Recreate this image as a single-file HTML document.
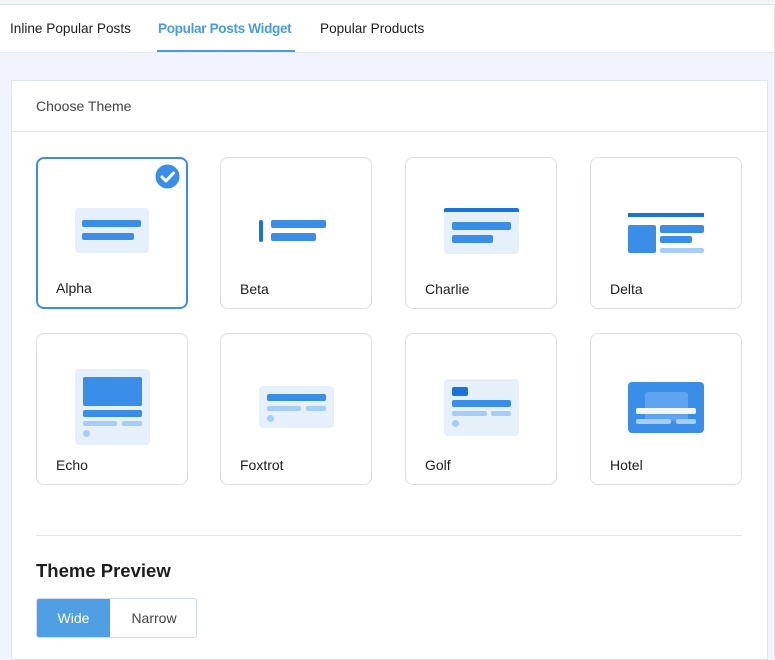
<!DOCTYPE html>
<html><head><style>
*{margin:0;padding:0;box-sizing:border-box}
body{width:775px;height:656px;overflow:hidden;background:#f1f4fc;font-family:"Liberation Sans",Arial,sans-serif;position:relative}
.top{position:absolute;left:0;top:0;width:775px;height:5px;background:#f3f4f6;border-bottom:1px solid #dbe6ef}
.tabs{position:absolute;left:0;top:5px;width:774px;height:48px;background:#fff;border-bottom:1px solid #e3e9f3}
.tab{position:absolute;top:16px;font-size:13.6px;color:#1e1e1e}
.tab.act{color:#4a9be3;font-weight:bold;letter-spacing:-0.35px}
.ul{position:absolute;left:157px;top:45px;width:138px;height:2px;background:#4a9be3}
.rb{position:absolute;right:0;top:5px;width:1px;height:651px;background:#e0e4ea}
.panel{position:absolute;left:11px;top:80px;width:757px;height:580px;background:#fff;border:1px solid #e0e5ee}
.ph{position:absolute;left:0;top:0;width:100%;height:51px;border-bottom:1px solid #e0e5ee}
.ph span{position:absolute;left:24px;top:17px;font-size:14px;color:#444}
.card{position:absolute;width:152px;height:152px;border:1px solid #dcdee4;border-radius:8px;background:#fff}
.card.sel{border:2px solid #3a8ee8}
.lbl{position:absolute;left:19px;top:123px;font-size:14px;color:#1e1e1e}
.sel .lbl{left:18px;top:121px}
.r{position:absolute;border-radius:2px}
.bg{background:#e6f0fb;border-radius:4px}
.b{background:#3a8ee8}
.d{background:#1a73d9}
.l{background:#a7ccf5}
.dot{position:absolute;width:7px;height:7px;border-radius:50%;background:#a7ccf5}
.div{position:absolute;left:36px;top:535px;width:706px;height:1px;background:#dde3ec}
h2{position:absolute;left:36px;top:560px;font-size:18.5px;font-weight:bold;color:#1e1e1e}
.btns{position:absolute;left:36px;top:598px;width:161px;height:40px;border:1px solid #d3dce8;border-radius:3px;overflow:hidden}
.w{position:absolute;left:0;top:0;width:73px;height:40px;background:#4e9fe3;color:#fff;font-size:14px;text-align:center;line-height:38px}
.n{position:absolute;left:73px;top:0;width:88px;height:40px;color:#444;font-size:14px;text-align:center;line-height:38px}
</style></head><body>
<div class="top"></div>
<div class="tabs">
<span class="tab" style="left:10px">Inline Popular Posts</span>
<span class="tab act" style="left:158px">Popular Posts Widget</span>
<span class="tab" style="left:320px">Popular Products</span>
<div class="ul"></div>
</div>
<div class="rb"></div>
<div class="panel"><div class="ph"><span>Choose Theme</span></div></div>

<div class="card sel" style="left:36px;top:157px">
<div class="r bg" style="left:37px;top:49px;width:74px;height:45px"></div>
<div class="r b" style="left:44px;top:61px;width:59px;height:7px"></div>
<div class="r b" style="left:44px;top:74px;width:52px;height:7px"></div>
<svg style="position:absolute;left:117px;top:5px" width="25" height="25" viewBox="0 0 25 25"><circle cx="12.5" cy="12.5" r="12" fill="#3a8ee8"/><path d="M7 13l4 4 7.5-8" stroke="#fff" stroke-width="3" fill="none" stroke-linecap="round" stroke-linejoin="round"/></svg>
<span class="lbl">Alpha</span></div>

<div class="card" style="left:220px;top:157px">
<div class="r d" style="left:38px;top:62px;width:4px;height:22px"></div>
<div class="r b" style="left:50px;top:62px;width:55px;height:8px"></div>
<div class="r b" style="left:50px;top:75px;width:45px;height:8px"></div>
<span class="lbl">Beta</span></div>

<div class="card" style="left:405px;top:157px">
<div class="r bg" style="left:38px;top:50px;width:75px;height:46px"></div>
<div class="r d" style="left:38px;top:50px;width:75px;height:4px;border-radius:2px 2px 0 0"></div>
<div class="r b" style="left:46px;top:64px;width:59px;height:8px"></div>
<div class="r b" style="left:46px;top:77px;width:41px;height:8px"></div>
<span class="lbl">Charlie</span></div>

<div class="card" style="left:590px;top:157px">
<div class="r d" style="left:37px;top:55px;width:76px;height:4px;border-radius:0"></div>
<div class="r b" style="left:37px;top:67px;width:28px;height:28px"></div>
<div class="r b" style="left:69px;top:67px;width:44px;height:8px"></div>
<div class="r b" style="left:69px;top:78px;width:32px;height:7px"></div>
<div class="r l" style="left:69px;top:90px;width:44px;height:5px"></div>
<span class="lbl">Delta</span></div>

<div class="card" style="left:36px;top:333px">
<div class="r bg" style="left:38px;top:35px;width:75px;height:76px"></div>
<div class="r b" style="left:46px;top:43px;width:59px;height:29px"></div>
<div class="r b" style="left:46px;top:76px;width:59px;height:7px"></div>
<div class="r l" style="left:46px;top:87px;width:34px;height:5px"></div>
<div class="r l" style="left:85px;top:87px;width:20px;height:5px"></div>
<div class="dot" style="left:46px;top:96px"></div>
<span class="lbl">Echo</span></div>

<div class="card" style="left:220px;top:333px">
<div class="r bg" style="left:38px;top:52px;width:75px;height:42px"></div>
<div class="r b" style="left:46px;top:60px;width:59px;height:7px"></div>
<div class="r l" style="left:46px;top:72px;width:34px;height:5px"></div>
<div class="r l" style="left:85px;top:72px;width:20px;height:5px"></div>
<div class="dot" style="left:46px;top:81px"></div>
<span class="lbl">Foxtrot</span></div>

<div class="card" style="left:405px;top:333px">
<div class="r bg" style="left:38px;top:45px;width:75px;height:57px"></div>
<div class="r d" style="left:46px;top:53px;width:16px;height:9px"></div>
<div class="r b" style="left:46px;top:66px;width:59px;height:7px"></div>
<div class="r l" style="left:46px;top:77px;width:35px;height:5px"></div>
<div class="r l" style="left:85px;top:77px;width:20px;height:5px"></div>
<div class="dot" style="left:46px;top:86px"></div>
<span class="lbl">Golf</span></div>

<div class="card" style="left:590px;top:333px">
<div class="r b" style="left:37px;top:48px;width:76px;height:51px;border-radius:4px"></div>
<div class="r" style="left:54px;top:58px;width:43px;height:29px;background:#5ea4ee;border-radius:3px"></div>
<div class="r" style="left:45px;top:74px;width:60px;height:6px;background:#f2f7fd"></div>
<div class="r" style="left:45px;top:85px;width:35px;height:5px;background:#a7ccf5"></div>
<div class="r" style="left:85px;top:85px;width:20px;height:5px;background:#a7ccf5"></div>
<span class="lbl">Hotel</span></div>

<div class="div"></div>
<h2>Theme Preview</h2>
<div class="btns"><div class="w">Wide</div><div class="n">Narrow</div></div>
</body></html>
